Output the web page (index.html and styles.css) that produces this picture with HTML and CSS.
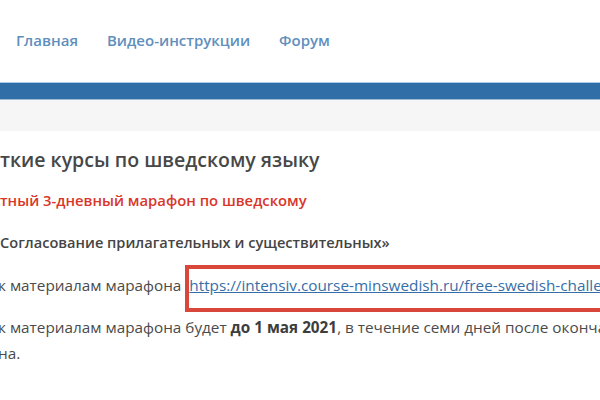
FILE: index.html
```html
<!DOCTYPE html>
<html lang="ru">
<head>
<meta charset="utf-8">
<link rel="stylesheet" href="styles.css">
</head>
<body>
<header class="top">
  <nav class="nav">
    <a class="nav-link" href="#">Главная</a>
    <a class="nav-link" href="#">Видео-инструкции</a>
    <a class="nav-link" href="#">Форум</a>
  </nav>
</header>
<div class="bar"></div>
<div class="band"></div>
<main class="content">
  <h1 class="title">ткие курсы по шведскому языку</h1>
  <p class="promo">тный 3-дневный марафон по шведскому</p>
  <p class="topic">Согласование прилагательных и существительных»</p>
  <p class="line access">к материалам марафона <a class="link boxed" href="#">https://intensiv.course-minswedish.ru/free-swedish-challenge</a></p>
  <p class="line note">к материалам марафона будет <b>до 1 мая 2021</b>, в течение семи дней после окончания</p>
  <p class="line end">на.</p>
</main>
</body>
</html>
```
FILE: styles.css
```css
html, body {
  margin: 0;
  padding: 0;
  background: #ffffff;
  overflow: hidden;
}
body {
  width: 600px;
  height: 400px;
  font-family: "Open Sans", "Noto Sans", sans-serif;
  color: #444444;
}
.top {
  height: 82px;
  display: flex;
  align-items: flex-start;
}
.nav {
  display: flex;
  gap: 29px;
  padding: 29px 0 0 16px;
}
.nav-link {
  color: #5f8fbd;
  font-weight: 600;
  font-size: 15px;
  line-height: 22px;
  text-decoration: none;
  white-space: nowrap;
}
.bar {
  height: 16px;
  background: #2f6ea6;
  border-top: 1px solid #a9cbe6;
  border-bottom: 1px solid #9dbdd6;
}
.band {
  height: 31px;
  background: #f6f6f6;
}
.content {
  white-space: nowrap;
  overflow: hidden;
}
.title {
  margin: 14px 0 0 0;
  font-size: 19.5px;
  font-weight: 600;
  line-height: 30px;
  color: #474747;
}
.promo {
  margin: 14px 0 0 0;
  font-size: 14.8px;
  font-weight: 600;
  line-height: 22px;
  color: #d8372a;
}
.topic {
  margin: 20px 0 0 0;
  font-size: 14.6px;
  font-weight: 600;
  line-height: 22px;
  color: #444444;
}
.line {
  margin: 0;
  font-size: 15.3px;
  line-height: 26px;
  color: #4a4a4a;
  text-indent: -2px;
}
.access {
  margin-top: 19px;
}
.note {
  margin-top: 16px;
}
.line b {
  font-weight: 700;
  color: #3d3d3d;
}
.link {
  color: #356ea8;
  text-decoration: underline;
}
.boxed {
  position: relative;
  margin-left: 4px;
}
.boxed::after {
  content: "";
  position: absolute;
  left: -4px;
  right: -40px;
  top: -10px;
  bottom: -17px;
  border: 4px solid #d9473a;
  pointer-events: none;
}
```
